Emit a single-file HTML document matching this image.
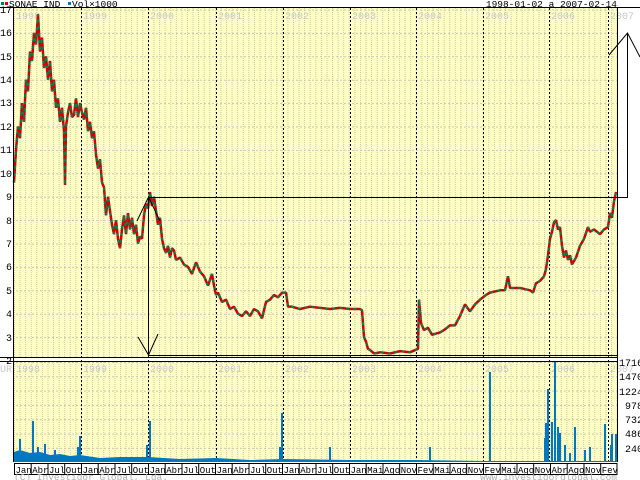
<!DOCTYPE html>
<html><head><style>
html,body{margin:0;padding:0;background:#fff;width:640px;height:480px;overflow:hidden}
svg{display:block}
text{font-family:"Liberation Mono",monospace}
</style></head><body>
<svg width="640" height="480" viewBox="0 0 640 480" xmlns="http://www.w3.org/2000/svg">
<defs>
<pattern id="vg" x="14" y="0" width="5.58" height="4" patternUnits="userSpaceOnUse">
<rect x="0" y="0" width="1" height="1" fill="#c8c8b0"/><rect x="0" y="2" width="1" height="1" fill="#c8c8b0"/>
</pattern>
<pattern id="hg" x="0" y="9.5" width="4" height="23.4" patternUnits="userSpaceOnUse">
<rect x="0" y="0" width="2" height="1" fill="#c8c8b0"/>
</pattern>
<pattern id="hg2" x="0" y="362" width="4" height="14.3" patternUnits="userSpaceOnUse">
<rect x="0" y="0" width="2" height="1" fill="#c8c8b0"/>
</pattern>
<pattern id="yl" x="0" y="0" width="1" height="4" patternUnits="userSpaceOnUse">
<rect x="0" y="0" width="1" height="2" fill="#000"/>
</pattern>
</defs>
<rect x="14" y="8" width="603" height="350" fill="#ffffc4"/>
<rect x="14" y="362" width="603" height="100" fill="#ffffc4"/>
<rect x="14" y="8" width="603" height="350" fill="url(#vg)"/>
<rect x="14" y="8" width="603" height="350" fill="url(#hg)"/>
<rect x="14" y="362" width="603" height="100" fill="url(#vg)"/>
<rect x="14" y="362" width="603" height="100" fill="url(#hg2)"/>
<g fill="url(#yl)">
<rect x="81" y="8" width="1" height="454"/><rect x="148" y="8" width="1" height="454"/>
<rect x="216" y="8" width="1" height="454"/><rect x="283" y="8" width="1" height="454"/>
<rect x="350" y="8" width="1" height="454"/><rect x="416" y="8" width="1" height="454"/>
<rect x="483" y="8" width="1" height="454"/><rect x="549" y="8" width="1" height="454"/>
<rect x="608" y="8" width="1" height="454"/>
</g>
<g font-size="10" fill="#c8c8c8">
<text x="16" y="19">1998</text><text x="83" y="19">1999</text><text x="150" y="19">2000</text><text x="218" y="19">2001</text><text x="285" y="19">2002</text><text x="352" y="19">2003</text><text x="418" y="19">2004</text><text x="485" y="19">2005</text><text x="551" y="19">2006</text><text x="610" y="19">2007</text>
<text x="16" y="372">1998</text><text x="83" y="372">1999</text><text x="150" y="372">2000</text><text x="218" y="372">2001</text><text x="285" y="372">2002</text><text x="352" y="372">2003</text><text x="418" y="372">2004</text><text x="485" y="372">2005</text><text x="551" y="372">2006</text><text x="610" y="372">2007</text>
<text x="0" y="372">UR</text>
</g>
<g transform="translate(0,9.5) scale(1,-23.4) translate(0,-17)" fill="none" stroke-linejoin="bevel">
<polyline vector-effect="non-scaling-stroke" stroke="#d00000" stroke-width="2.5" points="14,9.6 16,11 18,12 20,11.5 22,13 24,12.2 26,14 28,13.5 30,15.2 32,14.8 34,16 36,15.5 38,16.8 40,15.2 42,15.8 44,14.5 46,15 48,14 50,14.8 52,13.5 54,14 56,12.8 58,13.2 60,12.2 62,12.8 64,11.8 65,9.5 66,12 68,12.6 70,13 72,12.4 74,12.5 76,13.2 78,12.4 80,13 82,12.6 84,12.3 86,12.8 88,11.8 90,12.2 92,11.5 94,11.8 96,10.8 98,10.2 100,10.6 102,9.6 104,9.4 106,8.2 108,9 110,8.4 112,7.8 114,7.4 116,8 118,7.2 120,6.8 122,7.6 124,8.2 126,7.4 128,8.3 130,7.6 132,8.1 134,7.4 136,7.8 138,7 140,7.3 142,7.2 144,8.2 146,8.7 148,8.5 150,9.2 152,8.6 154,9 156,8.4 158,7.8 160,8.1 162,7.2 164,6.8 166,6.6 168,6.9 170,6.4 172,6.8 174,6.7 176,6.3 180,6.4 184,6.1 188,6 192,5.7 196,6.2 200,5.8 204,5.6 208,5.2 212,5.7 214,5.2 216,4.8 218,4.9 222,4.5 226,4.6 230,4.2 234,4.3 238,4 242,3.9 246,4.1 250,3.9 254,4.2 258,4.1 262,3.8 266,4.5 270,4.6 274,4.8 278,4.7 282,4.9 286,4.9 288,4.3 292,4.3 300,4.2 310,4.3 320,4.25 330,4.2 340,4.25 350,4.2 360,4.2 362,4.15 364,3 366,2.8 368,2.5 370,2.45 374,2.3 380,2.35 390,2.3 400,2.4 410,2.35 418,2.5 419,4.6 421,3.6 424,3.3 428,3.4 432,3.1 440,3.2 444,3.3 450,3.5 455,3.5 460,3.9 465,4.4 470,4.1 475,4.4 480,4.6 486,4.8 490,4.9 500,5 505,5 508,5.6 510,5.1 520,5.1 530,5 533,4.9 536,5.3 540,5.4 544,5.6 546,5.9 548,6.5 550,7.2 552,7.5 554,7.9 556,8 558,7.6 560,7.7 562,6.9 564,6.4 566,6.7 568,6.3 570,6.5 572,6.1 576,6.4 580,6.9 584,7.2 588,7.7 590,7.5 594,7.6 600,7.4 604,7.6 608,7.7 610,8.3 612,8.1 614,8.8 616,9.2"/>
<polyline vector-effect="non-scaling-stroke" stroke="#008050" stroke-width="2" stroke-dasharray="3 4" points="14,9.6 16,11 18,12 20,11.5 22,13 24,12.2 26,14 28,13.5 30,15.2 32,14.8 34,16 36,15.5 38,16.8 40,15.2 42,15.8 44,14.5 46,15 48,14 50,14.8 52,13.5 54,14 56,12.8 58,13.2 60,12.2 62,12.8 64,11.8 65,9.5 66,12 68,12.6 70,13 72,12.4 74,12.5 76,13.2 78,12.4 80,13 82,12.6 84,12.3 86,12.8 88,11.8 90,12.2 92,11.5 94,11.8 96,10.8 98,10.2 100,10.6 102,9.6 104,9.4 106,8.2 108,9 110,8.4 112,7.8 114,7.4 116,8 118,7.2 120,6.8 122,7.6 124,8.2 126,7.4 128,8.3 130,7.6 132,8.1 134,7.4 136,7.8 138,7 140,7.3 142,7.2 144,8.2 146,8.7 148,8.5 150,9.2 152,8.6 154,9 156,8.4 158,7.8 160,8.1 162,7.2 164,6.8 166,6.6 168,6.9 170,6.4 172,6.8 174,6.7 176,6.3 180,6.4 184,6.1 188,6 192,5.7 196,6.2 200,5.8 204,5.6 208,5.2 212,5.7 214,5.2 216,4.8 218,4.9 222,4.5 226,4.6 230,4.2 234,4.3 238,4 242,3.9 246,4.1 250,3.9 254,4.2 258,4.1 262,3.8 266,4.5 270,4.6 274,4.8 278,4.7 282,4.9 286,4.9 288,4.3 292,4.3 300,4.2 310,4.3 320,4.25 330,4.2 340,4.25 350,4.2 360,4.2 362,4.15 364,3 366,2.8 368,2.5 370,2.45 374,2.3 380,2.35 390,2.3 400,2.4 410,2.35 418,2.5 419,4.6 421,3.6 424,3.3 428,3.4 432,3.1 440,3.2 444,3.3 450,3.5 455,3.5 460,3.9 465,4.4 470,4.1 475,4.4 480,4.6 486,4.8 490,4.9 500,5 505,5 508,5.6 510,5.1 520,5.1 530,5 533,4.9 536,5.3 540,5.4 544,5.6 546,5.9 548,6.5 550,7.2 552,7.5 554,7.9 556,8 558,7.6 560,7.7 562,6.9 564,6.4 566,6.7 568,6.3 570,6.5 572,6.1 576,6.4 580,6.9 584,7.2 588,7.7 590,7.5 594,7.6 600,7.4 604,7.6 608,7.7 610,8.3 612,8.1 614,8.8 616,9.2"/>
</g>
<polygon fill="#0078c0" points="14,462 14,452 20,450 30,453 40,452 50,455 60,454 70,456 80,455 100,458 120,457 148,457 180,459 216,458 250,460 283,459 350,460 416,460 483,461 540,461 617,461 617,462"/>
<path stroke="#0078c0" stroke-width="2" fill="none" d="M20,462V439 M33,462V421 M38,462V447 M45,462V444 M55,462V450 M78,462V447 M80,462V436 M147,462V445 M150,462V421 M282,462V413 M280,462V447 M330,462V447 M430,462V447 M490,462V372 M545,462V438 M546,462V423 M548,462V389 M552,462V422 M555,462V362 M558,462V427 M560,462V433 M565,462V445 M575,462V427 M570,462V453 M585,462V450 M590,462V447 M605,462V424 M612,462V434 M616,462V434 M611,462V445"/>
<g stroke="#000" stroke-width="1" fill="none">
<line x1="13.5" y1="8" x2="13.5" y2="462"/>
<line x1="617.5" y1="8" x2="617.5" y2="462"/>
<line x1="0" y1="7.5" x2="640" y2="7.5"/>
<line x1="0" y1="357.5" x2="617" y2="357.5"/>
<line x1="0" y1="361.5" x2="617" y2="361.5"/>
<polyline points="148,197.5 627.5,197.5 627.5,33"/>
<polyline points="609,55 627.5,33 640,57"/>
<line x1="148.5" y1="197" x2="148.5" y2="355"/>
<polyline points="137,221 148.5,197 160,221"/>
<polyline points="138,337 148.5,355 158,334"/>
<line x1="148" y1="355.5" x2="617" y2="355.5"/>
</g>
<g font-size="10" fill="#000" text-anchor="end">
<text x="12" y="13">17</text><text x="12" y="36">16</text><text x="12" y="60">15</text><text x="12" y="83">14</text><text x="12" y="106">13</text><text x="12" y="130">12</text><text x="12" y="153">11</text><text x="12" y="177">10</text><text x="12" y="200">9</text><text x="12" y="224">8</text><text x="12" y="247">7</text><text x="12" y="270">6</text><text x="12" y="294">5</text><text x="12" y="317">4</text><text x="12" y="341">3</text><text x="12" y="364">2</text>
</g>
<g font-size="10" fill="#000">
<text x="619" y="366">1716</text><text x="619" y="380">1470</text><text x="619" y="395">1224</text><text x="625" y="409">978</text><text x="625" y="423">732</text><text x="625" y="437">486</text><text x="625" y="452">240</text>
</g>
<rect x="1" y="2" width="3" height="3" fill="#008050"/><rect x="5" y="2" width="3" height="3" fill="#d00000"/>
<rect x="68" y="2" width="3" height="3" fill="#0078c0"/>
<text x="9" y="7" font-size="9.5" fill="#000">SONAE IND</text>
<text x="72" y="7" font-size="9.5" fill="#000">Vol×1000</text>
<text x="617" y="7" font-size="9.5" fill="#000" text-anchor="end">1998-01-02 a 2007-02-14</text>
<rect x="14" y="463" width="603" height="12" fill="#fff"/>
<g stroke="#000" fill="none">
<path d="M14,463.5H617 M14,474.5H617 M14.5,463V475 M31.2,463V475 M48,463V475 M64.7,463V475 M81.5,463V475 M98.2,463V475 M115,463V475 M131.7,463V475 M148.5,463V475 M165.2,463V475 M182,463V475 M198.7,463V475 M215.5,463V475 M232.2,463V475 M249,463V475 M265.7,463V475 M282.5,463V475 M299.2,463V475 M316,463V475 M332.7,463V475 M349.5,463V475 M366.2,463V475 M383,463V475 M399.7,463V475 M416.5,463V475 M433.2,463V475 M450,463V475 M466.7,463V475 M483.5,463V475 M500.2,463V475 M517,463V475 M533.7,463V475 M550.5,463V475 M567.2,463V475 M584,463V475 M600.7,463V475 M617,463V475"/>
</g>
<g font-size="9" fill="#000">
<text x="15.5" y="473">Jan</text><text x="32.2" y="473">Abr</text><text x="49" y="473">Jul</text><text x="65.7" y="473">Out</text>
<text x="82.5" y="473">Jan</text><text x="99.2" y="473">Abr</text><text x="116" y="473">Jul</text><text x="132.7" y="473">Out</text>
<text x="149.5" y="473">Jan</text><text x="166.2" y="473">Abr</text><text x="183" y="473">Jul</text><text x="199.7" y="473">Out</text>
<text x="216.5" y="473">Jan</text><text x="233.2" y="473">Abr</text><text x="250" y="473">Jul</text><text x="266.7" y="473">Out</text>
<text x="283.5" y="473">Jan</text><text x="300.2" y="473">Abr</text><text x="317" y="473">Jul</text><text x="333.7" y="473">Out</text>
<text x="350.5" y="473">Jan</text><text x="367.2" y="473">Mai</text><text x="384" y="473">Ago</text><text x="400.7" y="473">Nov</text>
<text x="417.5" y="473">Fev</text><text x="434.2" y="473">Mai</text><text x="451" y="473">Ago</text><text x="467.7" y="473">Nov</text>
<text x="484.5" y="473">Fev</text><text x="501.2" y="473">Mai</text><text x="518" y="473">Ago</text><text x="534.7" y="473">Nov</text>
<text x="551.5" y="473">Abr</text><text x="568.2" y="473">Ago</text><text x="585" y="473">Nov</text><text x="601.7" y="473">Fev</text>
</g>
<text x="14" y="480" font-size="9.5" fill="#b0b0b0">(C) Investidor Global, Lda.</text>
<text x="617" y="480" font-size="9.5" fill="#b0b0b0" text-anchor="end">www.investidorglobal.com</text>
</svg>
</body></html>
